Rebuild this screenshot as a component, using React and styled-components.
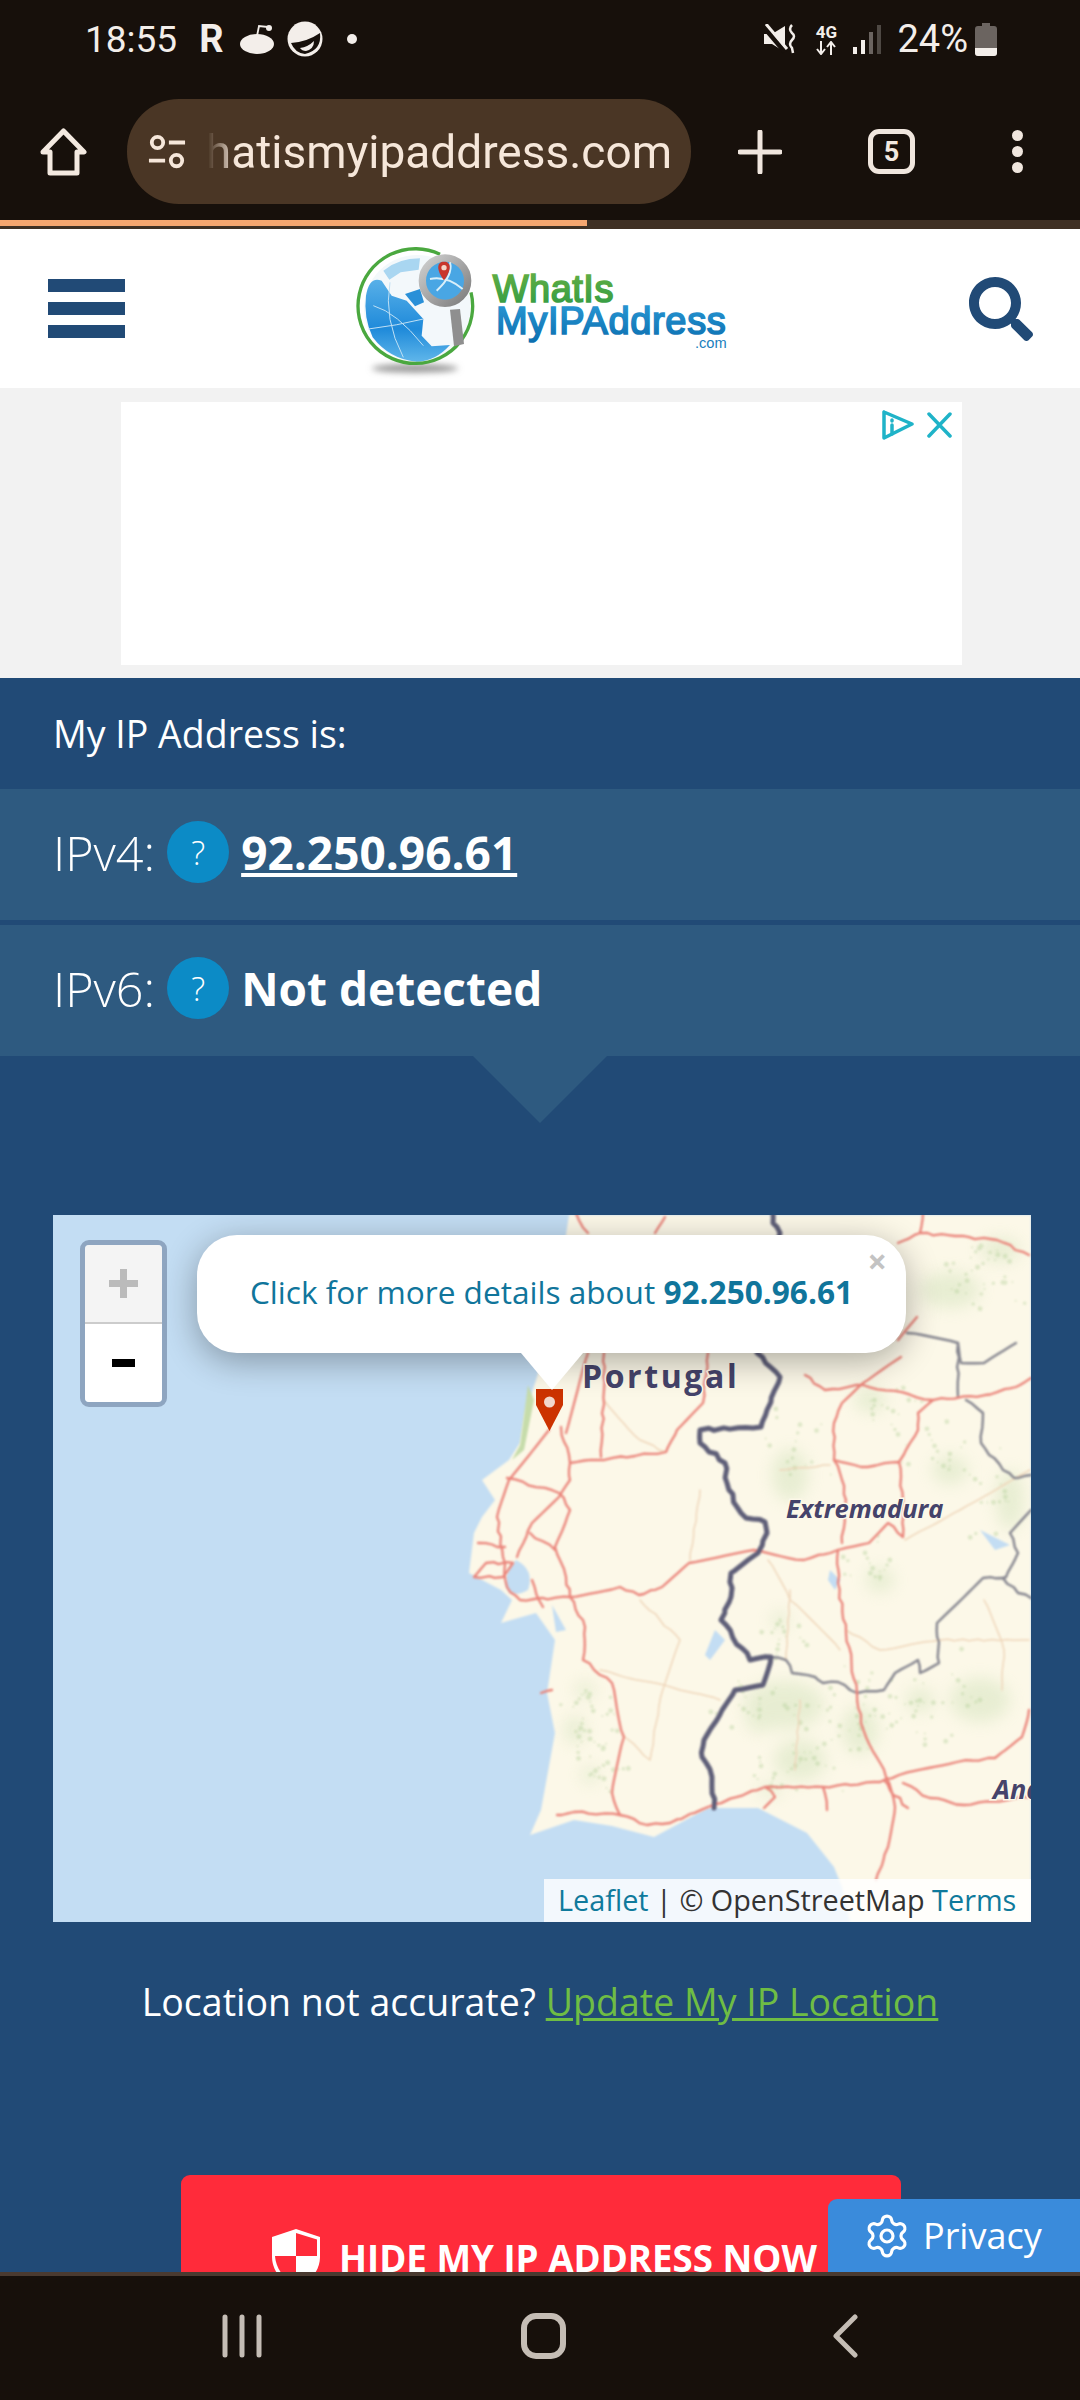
import styled, { createGlobalStyle } from 'styled-components';
import { FaSearch } from 'react-icons/fa';
import { Settings } from 'lucide-react';

const GlobalStyle = createGlobalStyle`
  html, body {
    margin: 0;
    padding: 0;
    background: #17100b;
  }
  * {
    box-sizing: border-box;
  }
`;

const Screen = styled.div`
  width: 1080px;
  height: 2400px;
  display: flex;
  flex-direction: column;
  overflow: hidden;
  font-family: 'Open Sans', sans-serif;
  background: #17100b;
`;

const StatusBar = styled.div`
  height: 78px;
  padding: 0 83px 0 85px;
  display: flex;
  align-items: center;
  justify-content: space-between;
  color: #f3eeea;
  font-family: Roboto, sans-serif;
  font-size: 37px;
`;

const StatusGroup = styled.div`
  display: flex;
  align-items: center;
`;

const StatusR = styled.span`
  font-size: 38px;
  font-weight: 700;
  margin: 0 17px 0 22px;
`;

const NetType = styled.div`
  width: 24px;
  margin: 0 15px 0 17px;
  display: flex;
  flex-direction: column;
  align-items: center;
  font-size: 17px;
  font-weight: 700;
  line-height: 17px;
`;

const Percent = styled.span`
  font-size: 38px;
  margin: 0 7px 0 16px;
`;

const Toolbar = styled.div`
  height: 142px;
  display: flex;
  align-items: center;
  padding: 5px 0 0 40px;
  color: #f3e9e0;
`;

const UrlPill = styled.div`
  width: 564px;
  height: 105px;
  margin: 0 47px 0 40px;
  border-radius: 52px;
  background: #4a3625;
  display: flex;
  align-items: center;
  padding: 0 18px 0 21px;
`;

const UrlClip = styled.div`
  width: 472px;
  margin-left: 14px;
  overflow: hidden;
  display: flex;
  justify-content: flex-end;
  white-space: nowrap;
  font-family: Roboto, sans-serif;
  font-size: 46px;
  color: #f6e7da;
  mask-image: linear-gradient(to right, transparent 8px, #000 36px);
`;

const TabCount = styled.div`
  width: 47px;
  height: 45px;
  margin: 0 97px 0 86px;
  border: 5px solid #f0e6de;
  border-radius: 11px;
  display: flex;
  align-items: center;
  justify-content: center;
  font-family: Roboto, sans-serif;
  font-weight: 700;
  font-size: 27px;
`;

const DotColumn = styled.div`
  display: flex;
  flex-direction: column;
  gap: 5px;
  i {
    width: 11px;
    height: 11px;
    border-radius: 50%;
    background: #f0e6de;
  }
`;

const Progress = styled.div`
  height: 9px;
  background: #3f3024;
  &::before {
    content: '';
    display: block;
    width: 587px;
    height: 6px;
    background: #f5a66f;
  }
`;

const Header = styled.header`
  height: 159px;
  background: #fff;
  display: flex;
  align-items: center;
  justify-content: space-between;
  padding: 0 47px 0 48px;
  color: #214a76;
`;

const Hamburger = styled.div`
  width: 77px;
  display: flex;
  flex-direction: column;
  gap: 10px;
  i {
    height: 13px;
    background: #214a76;
  }
`;

const LogoSvg = styled.svg`
  margin-right: 14px;
`;

const AdArea = styled.div`
  height: 290px;
  background: #f2f2f2;
  padding: 14px 118px 13px 121px;
`;

const AdSlot = styled.div`
  height: 100%;
  background: #fff;
  display: flex;
  justify-content: flex-end;
  padding: 7px 10px;
  svg {
    display: block;
  }
`;

const Main = styled.main`
  flex: 1;
  position: relative;
  overflow: hidden;
  background: #214a76;
  color: #fff;
`;

const Intro = styled.div`
  height: 111px;
  padding: 0 53px;
  display: flex;
  align-items: center;
  font-size: 37.5px;
`;

const IpRow = styled.div`
  height: 131px;
  margin-bottom: ${(p) => p.$gap}px;
  padding: 0 53px 5px;
  display: flex;
  align-items: center;
  background: #2e5a80;
  font-size: 48.5px;
  font-weight: 300;
`;

const HelpDot = styled.span`
  width: 62px;
  height: 62px;
  margin: 0 12px;
  border-radius: 50%;
  background: #0c8bc6;
  display: flex;
  align-items: center;
  justify-content: center;
  font-size: 33px;
`;

const IpValue = styled.span`
  font-size: 46px;
  font-weight: 700;
  text-decoration: ${(p) => (p.$link ? 'underline' : 'none')};
`;

const Pointer = styled.div`
  width: 0;
  margin: 0 auto 92px;
  border-left: 67px solid transparent;
  border-right: 67px solid transparent;
  border-top: 67px solid #2e5a80;
`;

const MapPane = styled.div`
  position: relative;
  width: 978px;
  height: 707px;
  margin-left: 53px;
  overflow: hidden;
  background: #c3ddf3;
  & > svg {
    display: block;
  }
`;

const ZoomBox = styled.div`
  position: absolute;
  left: 27px;
  top: 25px;
  width: 87px;
  height: 167px;
  border: 5px solid #8ea5c0;
  border-radius: 9px;
  overflow: hidden;
`;

const ZoomButton = styled.div`
  height: ${(p) => p.$height}px;
  display: flex;
  align-items: center;
  justify-content: center;
  background: ${(p) => (p.$off ? '#f4f4f4' : '#fff')};
  border-bottom: ${(p) => (p.$off ? '2px solid #ccc' : '0')};
  &::before {
    content: '';
    display: block;
    width: ${(p) => (p.$off ? 29 : 23)}px;
    height: ${(p) => (p.$off ? 29 : 8)}px;
    background: ${(p) =>
      p.$off
        ? 'linear-gradient(#bbb, #bbb) center / 100% 7px no-repeat, linear-gradient(#bbb, #bbb) center / 7px 100% no-repeat'
        : '#000'};
  }
`;

const Popup = styled.div`
  position: absolute;
  left: 144px;
  top: 20px;
  width: 709px;
  height: 118px;
  border-radius: 40px;
  background: #fff;
  box-shadow: 0 8px 34px rgba(0, 0, 0, 0.32);
  padding-top: 36px;
  text-align: center;
  font-size: 31.6px;
  line-height: 42px;
  color: #10759b;
  white-space: nowrap;
  b {
    font-weight: 700;
  }
  &::after {
    content: '';
    position: absolute;
    left: 324px;
    top: 118px;
    border-left: 31px solid transparent;
    border-right: 31px solid transparent;
    border-top: 37px solid #fff;
  }
`;

const PopupClose = styled.span`
  position: absolute;
  right: 19px;
  top: 6px;
  font-size: 34px;
  line-height: 40px;
  font-weight: 700;
  color: #c3c3c3;
`;

const Marker = styled.svg`
  position: absolute;
  left: 483px;
  top: 174px;
`;

const Attribution = styled.div`
  position: absolute;
  right: 0;
  bottom: 0;
  height: 43px;
  width: 487px;
  padding-left: 14px;
  background: rgba(255, 255, 255, 0.8);
  font-size: 28.8px;
  line-height: 42px;
  white-space: nowrap;
  color: #333;
  a {
    color: #0f7a9c;
  }
`;

const LocationLine = styled.p`
  margin: 55px 0 0;
  text-align: center;
  font-size: 37.5px;
  line-height: 50px;
  a {
    color: #6fbd44;
    text-decoration: underline;
  }
`;

const HideButton = styled.div`
  width: 720px;
  height: 160px;
  margin: 148px 0 0 181px;
  padding: 54px 0 0 91px;
  border-radius: 9px;
  background: #ff2b3a;
  display: flex;
  align-items: flex-start;
  font-size: 36.7px;
  font-weight: 700;
  line-height: 48px;
  white-space: nowrap;
  svg {
    margin-right: 19px;
    flex: none;
  }
`;

const HideLabel = styled.span`
  margin-top: 5px;
`;

const PrivacyTab = styled.div`
  position: absolute;
  right: 0;
  bottom: 0;
  width: 252px;
  height: 73px;
  padding-left: 35px;
  border-top-left-radius: 9px;
  background: #3a8bdb;
  display: flex;
  align-items: center;
  gap: 12px;
  font-size: 36px;
`;

const BottomNav = styled.nav`
  height: 128px;
  border-top: 4px solid #4a3a30;
  background: #17100b;
  display: flex;
  align-items: center;
  color: #c5bdb5;
  padding: 0 0 4px 222px;
  svg {
    display: block;
  }
`;

const NavSlot = styled.div`
  margin-right: ${(p) => p.$gap}px;
`;

const land =
  'M569 1215 L556 1300 L537 1377 L525 1413 L520 1443 L509 1460 L482 1480 L495 1500 L482 1517 L474 1533 L469 1573 L501 1590 L512 1600 L501 1623 L536 1613 L555 1640 L547 1693 L555 1733 L541 1810 L530 1835 L574 1820 L612 1826 L654 1837 L708 1808 L758 1808 L807 1833 L834 1867 L842 1887 L850 1922 L1031 1922 L1031 1215 Z';

const redRoads = [
  'M549 1430 L509 1480 L497 1517 L503 1557 L507 1587 L520 1600 L570 1597 L620 1587 L639 1595 L662 1587 L689 1563 L754 1550 L804 1560 L838 1550 L869 1543 L888 1523 L903 1537',
  'M561 1427 L570 1463 L570 1480 L559 1497 L532 1523 L517 1557',
  'M570 1463 L597 1460 L666 1452 L677 1430 L703 1403 L708 1353',
  'M507 1478 L559 1493 L570 1510 L555 1547 L566 1577 L570 1597 L585 1627 L583 1660 L612 1683 L624 1737 L612 1793 L620 1815',
  'M557 1815 L574 1812 L620 1815 L647 1825 L670 1823 L708 1807 L765 1787 L823 1787 L880 1782 L899 1775 L957 1762 L995 1758 L1022 1737 L1029 1710',
  'M838 1550 L838 1583 L846 1633 L857 1693 L861 1723 L886 1777 L895 1807 L888 1847 L876 1880',
  'M903 1783 L930 1798 L964 1805 L1029 1797',
  'M834 1460 L842 1480 L846 1500 L842 1543',
  'M834 1460 L861 1467 L899 1462 L903 1500 L903 1537',
  'M834 1460 L834 1423 L842 1403 L863 1383 L901 1357',
  'M805 1375 L825 1390 L863 1385 L933 1400 L985 1395 L1016 1387 L1031 1378',
  'M899 1462 L918 1430 L918 1413 L933 1400',
  'M923 1213 L920 1233 L955 1236 L997 1240 L1029 1255',
  'M920 1233 L898 1243',
  'M917 1317 L898 1340',
  'M576 1213 L588 1233',
  'M665 1217 L655 1233',
  'M604 1353 L604 1390 L601 1457',
  'M588 1353 L566 1433',
  'M478 1543 L505 1547',
  'M474 1577 L486 1563 L513 1563 L503 1577 L474 1577',
  'M532 1580 L543 1607',
  'M530 1533 L555 1550',
  'M541 1693 L552 1690',
  'M884 1780 L890 1790 L908 1808',
  'M765 1787 L775 1797 L764 1808',
  'M823 1787 L827 1810',
];

const minorRoads = [
  'M604 1400 L640 1440 L666 1452',
  'M640 1600 L680 1640 L660 1700 L650 1760 L622 1735',
  'M600 1670 L680 1690 L720 1700',
  'M768 1560 L790 1600 L840 1650',
  'M846 1630 L880 1650 L940 1640 L1029 1640',
  'M700 1490 L690 1560',
  'M905 1540 L960 1510 L1030 1470',
  'M780 1470 L830 1465',
  'M790 1590 L786 1660',
  'M800 1700 L795 1770',
  'M984 1600 L1004 1650 L1002 1690',
];

const thinBorders = [
  'M771 1657 L786 1660 L792 1673 L815 1677 L823 1683 L838 1682 L857 1693 L884 1690 L895 1673 L918 1660 L920 1673 L939 1663 L937 1623 L964 1597 L983 1578 L1003 1578 L1018 1593 L1031 1598',
  'M966 1400 L983 1413 L981 1443 L1003 1470 L1014 1478 L1031 1475',
  'M907 1333 L958 1343 L961 1363 L984 1363 L1016 1343',
  'M958 1343 L958 1397',
  'M1031 1510 L1010 1533 L1018 1553 L1006 1577 L1003 1578',
];

const thickBorder =
  'M773 1213 L773 1223 L780 1233 L770 1290 L757 1353 L780 1377 L767 1410 L761 1427 L700 1430 L700 1443 L725 1463 L727 1483 L737 1507 L746 1518 L765 1522 L767 1533 L758 1553 L731 1573 L731 1597 L721 1620 L750 1660 L771 1657 L763 1685 L735 1690 L704 1740 L702 1757 L712 1777 L714 1808';

const greenPatches = [
  [784, 1705, 40, 24], [800, 1760, 26, 20], [860, 1730, 18, 24], [760, 1720, 14, 12],
  [980, 1700, 30, 22], [920, 1700, 14, 12], [585, 1690, 10, 8], [575, 1730, 10, 14],
  [590, 1775, 9, 8], [790, 1475, 18, 26], [950, 1470, 18, 14], [1010, 1500, 14, 30],
  [1000, 1250, 20, 12], [780, 1620, 9, 9], [870, 1400, 16, 12], [950, 1290, 30, 18],
  [770, 1790, 12, 6], [880, 1580, 14, 12],
];

// scatter of small specks, the forest texture of the tiles
const specks = greenPatches.flatMap(([cx, cy, rx, ry], i) =>
  Array.from({ length: 18 }, (_, n) => {
    const a = (i * 37 + n * 101) % 360;
    const r = ((n * 53 + i * 19) % 100) / 100;
    return [
      cx + Math.cos(a) * (rx + 14) * 1.8 * r,
      cy + Math.sin(a) * (ry + 14) * 1.8 * r,
      1 + ((n * 7) % 3) * 0.7,
    ];
  }),
);

const lakes = [
  'M516 1560 Q535 1570 528 1590 Q510 1600 506 1585 Q505 1570 516 1560 Z',
  'M715 1630 L725 1640 L710 1660 L705 1655 Z',
  'M552 1605 L566 1630 L556 1632 Z',
  'M830 1570 L840 1580 L835 1590 L828 1580 Z',
  'M980 1530 L1010 1545 L995 1550 Z',
];

// breaks a polyline into short wobbling steps so it reads like a real road
function roughen(d, amp) {
  const n = d.match(/[\d.]+/g).map(Number);
  let out = `M${n[0]} ${n[1]}`;
  for (let i = 2; i < n.length; i += 2) {
    const [x0, y0, x1, y1] = [n[i - 2], n[i - 1], n[i], n[i + 1]];
    const steps = Math.ceil(Math.hypot(x1 - x0, y1 - y0) / 8);
    for (let s = 1; s <= steps; s++) {
      const x = x0 + ((x1 - x0) * s) / steps;
      const y = y0 + ((y1 - y0) * s) / steps;
      const wob = s === steps ? 0 : Math.sin(x * 1.3 + y * 2.1) * amp;
      out += ` L${(x + wob).toFixed(1)} ${(y - wob).toFixed(1)}`;
    }
  }
  return out;
}

function StatusIcons() {
  return (
    <StatusGroup>
      18:55
      <StatusR>R</StatusR>
      <svg width="35" height="30" viewBox="0 0 35 30" fill="#f3eeea">
        <ellipse cx="17" cy="20" rx="17" ry="10" />
        <path d="M17 12 L19 2 L28 3" fill="none" stroke="#f3eeea" strokeWidth="1.8" />
        <circle cx="29" cy="4" r="3" />
      </svg>
      <svg width="36" height="36" viewBox="0 0 36 36" style={{ marginLeft: 12 }}>
        <circle cx="18" cy="18" r="17.5" fill="#f3eeea" />
        <path d="M4 22 Q20 21 33 12 Q35 29 18 33 Q8 32 4 22 Z" fill="#17100b" />
        <path d="M13 27 Q21 26 27 20 Q27 28 19 30 Q15 30 13 27 Z" fill="#f3eeea" />
      </svg>
      <svg width="10" height="10" style={{ marginLeft: 24 }}>
        <circle cx="5" cy="5" r="5" fill="#f3eeea" />
      </svg>
    </StatusGroup>
  );
}

function SystemIcons() {
  return (
    <StatusGroup>
      <svg width="33" height="30" viewBox="0 0 33 30" fill="#f3eeea">
        <path d="M0 10 L8 10 L21 2 L21 28 L8 20 L0 20 Z" />
        <path d="M-1 2 L21 28" stroke="#17100b" strokeWidth="5" />
        <path d="M2 0 L23 25" stroke="#f3eeea" strokeWidth="3" />
        <path d="M28 1 Q24 5 28 9 Q32 12 28 16 Q24 20 28 24 L29 29" fill="none" stroke="#f3eeea" strokeWidth="2.5" />
      </svg>
      <NetType>
        4G
        <svg width="24" height="14" viewBox="0 0 24 14" fill="none" stroke="#f3eeea" strokeWidth="2">
          <path d="M7 0 V12 M3 8 L7 13 L11 8 M17 14 V2 M13 6 L17 1 L21 6" />
        </svg>
      </NetType>
      <svg width="28" height="29" viewBox="0 0 28 29">
        <rect x="0" y="22" width="4" height="7" fill="#f3eeea" />
        <rect x="8" y="15" width="4" height="14" fill="#f3eeea" />
        <rect x="16" y="7" width="4" height="22" fill="#6b6460" />
        <rect x="24" y="0" width="4" height="29" fill="#4e4843" />
      </svg>
      <Percent>24%</Percent>
      <svg width="22" height="33" viewBox="0 0 22 33">
        <path d="M7 0 H15 V3 H19 Q22 3 22 6 V30 Q22 33 19 33 H3 Q0 33 0 30 V6 Q0 3 3 3 H7 Z" fill="#6b6460" />
        <path d="M0 25 H22 V30 Q22 33 19 33 H3 Q0 33 0 30 Z" fill="#f3eeea" />
      </svg>
    </StatusGroup>
  );
}

function LogoMark() {
  return (
    <LogoSvg width="400" height="140" viewBox="0 0 1200 420">
      <defs>
        <linearGradient id="oceanFill" x1="0" y1="0" x2="0" y2="1">
          <stop offset="0" stopColor="#58b0e8" />
          <stop offset="0.6" stopColor="#1f8ada" />
          <stop offset="1" stopColor="#5fb6ea" />
        </linearGradient>
        <linearGradient id="whatFill" x1="0" y1="0" x2="0" y2="1">
          <stop offset="0" stopColor="#66b044" />
          <stop offset="1" stopColor="#2f9a44" />
        </linearGradient>
        <linearGradient id="addrFill" x1="0" y1="0" x2="0" y2="1">
          <stop offset="0" stopColor="#2a9ad6" />
          <stop offset="1" stopColor="#0c6fb0" />
        </linearGradient>
        <linearGradient id="lensRim" x1="0" y1="0" x2="1" y2="1">
          <stop offset="0" stopColor="#cfcfcf" />
          <stop offset="1" stopColor="#7d7d7d" />
        </linearGradient>
        <filter id="logoShadow" x="-30%" y="-100%" width="160%" height="300%">
          <feGaussianBlur stdDeviation="10" />
        </filter>
      </defs>
      <ellipse cx="225" cy="388" rx="130" ry="13" fill="#999" filter="url(#logoShadow)" />
      <circle cx="232" cy="208" r="160" fill="#f3f8fb" />
      <path d="M78 170 Q88 110 125 125 L155 170 L200 185 L250 240 L245 290 L275 322 L330 318 Q285 368 230 368 Q150 362 98 295 Q70 235 78 170 Z" fill="url(#oceanFill)" />
      <path d="M130 95 Q175 58 240 58 L236 92 L182 100 L148 122 Z" fill="#a9d6f1" />
      <path d="M195 165 L240 150 L252 190 L225 202 Z" fill="#2a90d8" />
      <path d="M100 200 Q170 220 250 320 M150 130 Q130 240 190 355 M85 270 Q170 260 250 240" fill="none" stroke="#bfe0f5" strokeWidth="3" />
      <path d="M300 46 A172 172 0 1 0 393 160" fill="none" stroke="#4aa83f" strokeWidth="10" />
      <circle cx="315" cy="125" r="68" fill="#49a6e4" stroke="url(#lensRim)" strokeWidth="22" />
      <path d="M270 120 Q320 110 368 150 M290 155 Q340 110 330 70" fill="none" stroke="#d9effa" strokeWidth="6" />
      <path d="M312 68 C290 68 288 92 312 124 C336 92 334 68 312 68 Z" fill="#c8352b" />
      <circle cx="312" cy="86" r="8" fill="#f4d5c8" />
      <path d="M330 212 L360 210 L372 315 L342 322 Z" fill="#8f8f8f" />
      <text x="458" y="190" fontFamily="Liberation Sans" fontSize="114" fill="url(#whatFill)" stroke="url(#whatFill)" strokeWidth="5" letterSpacing="1.5">WhatIs</text>
      <text x="468" y="285" fontFamily="Liberation Sans" fontSize="114" fill="url(#addrFill)" stroke="url(#addrFill)" strokeWidth="5" letterSpacing="2">MyIPAddress</text>
      <text x="1160" y="328" textAnchor="end" fontFamily="Liberation Sans" fontSize="44" fill="#1a80bd">.com</text>
    </LogoSvg>
  );
}

function MapArt() {
  return (
    <svg width="978" height="707" viewBox="53 1215 978 707">
      <defs>
        <filter id="soft" x="-10%" y="-10%" width="120%" height="120%">
          <feGaussianBlur stdDeviation="0.8" />
        </filter>
        <filter id="patch" x="-40%" y="-40%" width="180%" height="180%">
          <feGaussianBlur stdDeviation="8" />
        </filter>
        <clipPath id="landClip">
          <path d={land} />
        </clipPath>
      </defs>
      <path d={land} fill="#fcf8e8" filter="url(#soft)" />
      <path d="M528 1385 L520 1445 L512 1460 L524 1450 L534 1400 Z" fill="#c6dcaa" filter="url(#soft)" />
      <g clipPath="url(#landClip)">
        <g fill="#c9deb2" opacity="0.4" filter="url(#patch)">
          {greenPatches.map(([cx, cy, rx, ry]) => (
            <ellipse key={`${cx}-${cy}`} cx={cx} cy={cy} rx={rx} ry={ry} />
          ))}
        </g>
        <g fill="#b2cf98" opacity="0.4" filter="url(#soft)">
          {specks.map(([cx, cy, r], i) => (
            <circle key={i} cx={cx} cy={cy} r={r} />
          ))}
        </g>
      </g>
      <g fill="#c3ddf3" filter="url(#soft)">
        {lakes.map((d) => (
          <path key={d} d={d} />
        ))}
      </g>
      <g fill="none" strokeLinejoin="round" strokeLinecap="round" filter="url(#soft)">
        {minorRoads.map((d) => (
          <path key={d} d={roughen(d, 0.8)} stroke="#efd6ba" strokeWidth="1.5" />
        ))}
        {thinBorders.map((d) => (
          <path key={d} d={roughen(d, 1)} stroke="#85858f" strokeWidth="2.4" />
        ))}
        {redRoads.map((d) => (
          <path key={d} d={roughen(d, 1.1)} stroke="#ea8379" strokeWidth="2.3" />
        ))}
        <path d={roughen(thickBorder, 1.3)} stroke="#5f5f78" strokeWidth="5" />
      </g>
      <g fontFamily="Open Sans" fontWeight="700" fill="#45436a" stroke="#fcf8e8" strokeWidth="3" paintOrder="stroke">
        <text x="582" y="1388" fontSize="32" letterSpacing="2.6">Portugal</text>
        <text x="786" y="1518" fontSize="25.5" fontStyle="italic">Extremadura</text>
        <text x="993" y="1799" fontSize="27" fontStyle="italic">And</text>
      </g>
    </svg>
  );
}

export default function App() {
  return (
    <Screen>
      <GlobalStyle />
      <StatusBar>
        <StatusIcons />
        <SystemIcons />
      </StatusBar>
      <Toolbar>
        <svg width="47" height="48" viewBox="0 0 47 48" fill="none" stroke="#f3e9e0" strokeWidth="5" strokeLinejoin="round">
          <path d="M3 24 L23.5 3 L44 24 L37 24 L37 45 L10 45 L10 24 Z" />
        </svg>
        <UrlPill>
          <svg width="38" height="36" viewBox="0 0 40 36" fill="none" stroke="#f6e7da" strokeWidth="4">
            <circle cx="10" cy="8" r="6" />
            <path d="M22 8 H39 M1 27 H18" />
            <circle cx="30" cy="27" r="6" />
          </svg>
          <UrlClip>whatismyipaddress.com</UrlClip>
        </UrlPill>
        <svg width="44" height="44" viewBox="0 0 44 44" stroke="#f0e6de" strokeWidth="5" strokeLinecap="round">
          <path d="M22 2 V42 M2 22 H42" />
        </svg>
        <TabCount>5</TabCount>
        <DotColumn>
          <i />
          <i />
          <i />
        </DotColumn>
      </Toolbar>
      <Progress />
      <Header>
        <Hamburger>
          <i />
          <i />
          <i />
        </Hamburger>
        <LogoMark />
        <FaSearch size={64} />
      </Header>
      <AdArea>
        <AdSlot>
          <svg width="70" height="32" viewBox="0 0 70 32" fill="none" stroke="#1fb3c8" strokeWidth="3.5" strokeLinecap="round" strokeLinejoin="round">
            <path d="M2 3 V29 L30 15 L2 3" />
            <path d="M10 16 V25 M10 11 V12" />
            <path d="M47 5 L68 27 M68 5 L47 27" />
          </svg>
        </AdSlot>
      </AdArea>
      <Main>
        <Intro>My IP Address is:</Intro>
        <IpRow $gap={5}>
          IPv4:
          <HelpDot>?</HelpDot>
          <IpValue $link>92.250.96.61</IpValue>
        </IpRow>
        <IpRow $gap={0}>
          IPv6:
          <HelpDot>?</HelpDot>
          <IpValue>Not detected</IpValue>
        </IpRow>
        <Pointer />
        <MapPane>
          <MapArt />
          <ZoomBox>
            <ZoomButton $off $height={79} />
            <ZoomButton $height={78} />
          </ZoomBox>
          <Marker width="27" height="42" viewBox="0 0 27 42">
            <path d="M0 0 H27 V16 L13.5 42 L0 16 Z" fill="#cc3300" />
            <circle cx="13.5" cy="13" r="5.5" fill="#f2d8cc" />
          </Marker>
          <Popup>
            <PopupClose>×</PopupClose>
            Click for more details about <b>92.250.96.61</b>
          </Popup>
          <Attribution>
            <a>Leaflet</a> | © OpenStreetMap <a>Terms</a>
          </Attribution>
        </MapPane>
        <LocationLine>
          Location not accurate? <a>Update My IP Location</a>
        </LocationLine>
        <HideButton>
          <svg width="48" height="60" viewBox="0 0 48 60">
            <path d="M24 0 L48 8 V28 C48 42 38 53 24 60 C10 53 0 42 0 28 V8 Z" fill="#fff" />
            <path d="M24 4 L45 10.5 V27 H24 Z" fill="#ff2b3a" />
            <path d="M3 27 H24 V56 C12 50 4 40 3 27 Z" fill="#ff2b3a" />
          </svg>
          <HideLabel>HIDE MY IP ADDRESS NOW</HideLabel>
        </HideButton>
        <PrivacyTab>
          <Settings size={48} strokeWidth={1.6} />
          Privacy
        </PrivacyTab>
      </Main>
      <BottomNav>
        <NavSlot $gap={259}>
          <svg width="40" height="44" viewBox="0 0 40 44" fill="none" stroke="#c5bdb5" strokeWidth="5" strokeLinecap="round">
            <path d="M3 3 V41 M20 3 V41 M37 3 V41" />
          </svg>
        </NavSlot>
        <NavSlot $gap={267}>
          <svg width="45" height="46" viewBox="0 0 45 46" fill="none" stroke="#c5bdb5" strokeWidth="6">
            <rect x="3" y="3" width="39" height="40" rx="12" />
          </svg>
        </NavSlot>
        <NavSlot $gap={0}>
          <svg width="25" height="44" viewBox="0 0 25 44" fill="none" stroke="#c5bdb5" strokeWidth="5" strokeLinecap="round" strokeLinejoin="round">
            <path d="M22 3 L3 22 L22 41" />
          </svg>
        </NavSlot>
      </BottomNav>
    </Screen>
  );
}
